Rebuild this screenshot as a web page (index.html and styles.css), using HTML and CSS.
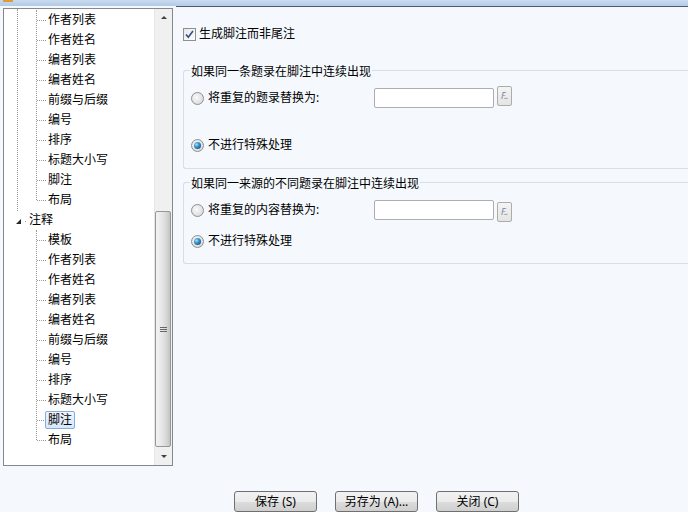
FILE: index.html
```html
<!DOCTYPE html>
<html lang="zh-CN">
<head>
<meta charset="utf-8">
<title>脚注</title>
<link rel="stylesheet" href="styles.css">
</head>
<body>
<div class="topbar">
  <div class="tb-left"><span class="tb-icon"></span></div>
  <div class="tb-right"></div>
</div>
<div class="main">
  <div class="tree">
    <div class="tree-body">
      <div class="branch outer">
        <div class="row">作者列表</div>
        <div class="row">作者姓名</div>
        <div class="row">编者列表</div>
        <div class="row">编者姓名</div>
        <div class="row">前缀与后缀</div>
        <div class="row">编号</div>
        <div class="row">排序</div>
        <div class="row">标题大小写</div>
        <div class="row">脚注</div>
        <div class="row">布局</div>
      </div>
      <div class="node"><span class="expander"></span><span class="node-stub"></span><span class="node-text">注释</span></div>
      <div class="branch">
        <div class="row">模板</div>
        <div class="row">作者列表</div>
        <div class="row">作者姓名</div>
        <div class="row">编者列表</div>
        <div class="row">编者姓名</div>
        <div class="row">前缀与后缀</div>
        <div class="row">编号</div>
        <div class="row">排序</div>
        <div class="row">标题大小写</div>
        <div class="row row-sel"><span class="sel">脚注</span></div>
        <div class="row">布局</div>
      </div>
    </div>
    <div class="scrollbar">
      <div class="sb-btn"><span class="arr-up"></span></div>
      <div class="sb-track">
        <div class="sb-thumb"><span class="grip"></span></div>
      </div>
      <div class="sb-btn"><span class="arr-down"></span></div>
    </div>
  </div>
  <div class="content">
    <div class="check-row">
      <span class="checkbox"><svg width="11" height="11" viewBox="0 0 11 11"><path d="M2 5.5 L4.3 8.2 L9 2" fill="none" stroke="#34508f" stroke-width="1.7"/></svg></span>
      <span class="check-label">生成脚注而非尾注</span>
    </div>
    <div class="group g1">
      <div class="group-title">如果同一条题录在脚注中连续出现</div>
      <div class="opt-row first">
        <span class="radio"></span>
        <span class="opt-label">将重复的题录替换为:</span>
        <span class="input"></span>
        <span class="fbtn fbtn-up">F..</span>
      </div>
      <div class="opt-row second">
        <span class="radio checked"></span>
        <span class="opt-text">不进行特殊处理</span>
      </div>
    </div>
    <div class="group g2">
      <div class="group-title">如果同一来源的不同题录在脚注中连续出现</div>
      <div class="opt-row first">
        <span class="radio"></span>
        <span class="opt-label">将重复的内容替换为:</span>
        <span class="input"></span>
        <span class="fbtn fbtn-down">F..</span>
      </div>
      <div class="opt-row second">
        <span class="radio checked"></span>
        <span class="opt-text">不进行特殊处理</span>
      </div>
    </div>
  </div>
</div>
<div class="buttons">
  <div class="btn">保存 (S)</div>
  <div class="btn">另存为 (A)...</div>
  <div class="btn">关闭 (C)</div>
</div>
</body>
</html>
```
FILE: styles.css
```css
html, body {
  margin: 0;
  padding: 0;
}
body {
  width: 688px;
  height: 512px;
  overflow: hidden;
  background: #f5f9fe;
  font-family: "Noto Sans", "Noto Sans CJK SC", sans-serif;
  font-size: 12px;
  line-height: 16px;
  color: #000;
}

/* top strip */
.topbar {
  display: flex;
  height: 7px;
}
.tb-left {
  width: 176px;
  height: 6px;
  background: linear-gradient(#c8dbf0, #b3cbe6);
}
.tb-icon {
  display: block;
  width: 10px;
  height: 2px;
  margin-left: 3px;
  background: #e39a3a;
}
.tb-right {
  flex: 1;
  height: 6px;
  background: linear-gradient(#c9dcf1, #b4cce7);
  border-bottom: 1px solid #4f5a66;
}

.main {
  display: flex;
  height: 459px;
}

/* tree */
.tree {
  margin-top: 1px;
  margin-left: 3px;
  width: 168px;
  height: 456px;
  border: 1px solid #828790;
  background: #fff;
  display: flex;
}
.tree-body {
  width: 150px;
  padding-top: 1px;
  overflow: hidden;
}
.branch {
  position: relative;
}
.branch::before {
  content: "";
  position: absolute;
  left: 32px;
  top: 0;
  bottom: 10px;
  border-left: 1px dotted #9a9a9a;
}
.branch.outer::after {
  content: "";
  position: absolute;
  left: 13px;
  top: -1px;
  bottom: -1px;
  border-left: 1px dotted #9a9a9a;
}
.row {
  position: relative;
  height: 20px;
  line-height: 20px;
  padding-left: 44px;
  white-space: nowrap;
}
.row::after {
  content: "";
  position: absolute;
  left: 33px;
  top: 10px;
  width: 9px;
  border-top: 1px dotted #9a9a9a;
}
.row-sel {
  padding-left: 41px;
}
.sel {
  display: inline-block;
  line-height: 16px;
  padding: 0 2px;
  border: 1px solid #84acdd;
  border-radius: 2px;
  background: linear-gradient(#eef5fd, #d5e6fb);
  vertical-align: top;
  margin-top: 1px;
}
.node {
  height: 20px;
  display: flex;
  align-items: center;
}
.expander {
  width: 0;
  height: 0;
  margin-left: 12px;
  border-left: 5px solid transparent;
  border-bottom: 5px solid #262626;
  margin-top: 2px;
}
.node-stub {
  width: 1px;
  height: 1px;
  background: #9a9a9a;
  margin-left: 4px;
  margin-top: 2px;
}
.node-text {
  margin-left: 3px;
  line-height: 20px;
}

/* scrollbar */
.scrollbar {
  width: 17px;
  display: flex;
  flex-direction: column;
  background: #f0f0f0;
  border-left: 1px solid #e6e6e6;
}
.sb-btn {
  height: 17px;
  display: flex;
  align-items: center;
  justify-content: center;
}
.arr-up {
  width: 0;
  height: 0;
  border-left: 3px solid transparent;
  border-right: 3px solid transparent;
  border-bottom: 3px solid #404040;
}
.arr-down {
  width: 0;
  height: 0;
  border-left: 3px solid transparent;
  border-right: 3px solid transparent;
  border-top: 3px solid #404040;
}
.sb-track {
  flex: 1;
  display: flex;
  flex-direction: column;
  padding-top: 185px;
}
.sb-thumb {
  flex: 1;
  margin: 0 1px 1px 0;
  border: 1px solid #979797;
  border-radius: 2px;
  background: linear-gradient(to right, #f3f3f3 0%, #e6e6e6 45%, #d6d6d6 75%, #c2c2c2 100%);
  display: flex;
  align-items: center;
  justify-content: center;
}
.grip {
  width: 7px;
  height: 5px;
  background: repeating-linear-gradient(#666 0 1px, transparent 1px 2px);
}

/* right content */
.content {
  flex: 1;
  padding-left: 10px;
  padding-top: 17px;
  display: flex;
  flex-direction: column;
}
.check-row {
  height: 20px;
  display: flex;
  align-items: center;
}
.checkbox {
  width: 11px;
  height: 11px;
  border: 1px solid #8e8f8f;
  background: linear-gradient(135deg, #e8e8e8, #fdfdfd);
  display: flex;
  align-items: center;
  justify-content: center;
}
.check-label {
  margin-left: 3px;
}

.group {
  display: flex;
  flex-direction: column;
  border: 1px solid #d5dfe5;
  border-right: none;
  border-radius: 3px 0 0 3px;
  padding-left: 7px;
}
.g1 {
  margin-top: 26px;
  padding-bottom: 13px;
}
.g2 {
  margin-top: 13px;
  padding-bottom: 12px;
}
.group-title {
  align-self: flex-start;
  margin-top: -7px;
  margin-left: -1px;
  height: 16px;
  line-height: 16px;
  padding: 0 1px;
  background: #f5f9fe;
}
.opt-row {
  display: flex;
  align-items: center;
}
.opt-row.first {
  height: 24px;
  margin-top: 6px;
}
.g1 .opt-row.second {
  height: 20px;
  margin-top: 25px;
}
.g2 .opt-row.second {
  height: 20px;
  margin-top: 9px;
}
.radio {
  width: 11px;
  height: 11px;
  border: 1px solid #8e8f8f;
  border-radius: 50%;
  background: radial-gradient(circle at 40% 40%, #fafafa 0%, #e2e2e2 60%, #cfcfcf 100%);
  display: flex;
  align-items: center;
  justify-content: center;
  flex: none;
}
.radio.checked::after {
  content: "";
  width: 7px;
  height: 7px;
  border-radius: 50%;
  background: radial-gradient(circle at 35% 35%, #a7e3fb 0%, #3d9ad6 35%, #15548e 80%, #0c3f70 100%);
}
.opt-label {
  margin-left: 4px;
  width: 166px;
  white-space: nowrap;
}
.opt-text {
  margin-left: 4px;
}
.input {
  width: 118px;
  height: 18px;
  border: 1px solid #abadb3;
  border-radius: 2px;
  background: #fff;
}
.fbtn {
  width: 13px;
  height: 18px;
  margin-left: 3px;
  border: 1px solid #acacac;
  border-radius: 2px;
  background: linear-gradient(#f4f4f4, #e4e4e4);
  font-size: 9px;
  font-style: italic;
  color: #6f8296;
  line-height: 18px;
  text-align: center;
  overflow: hidden;
  letter-spacing: -0.5px;
}
.fbtn-up {
  align-self: flex-start;
}
.fbtn-down {
  align-self: flex-end;
}

/* bottom buttons */
.buttons {
  display: flex;
  gap: 18px;
  margin-top: 25px;
  margin-left: 234px;
}
.btn {
  width: 81px;
  height: 19px;
  border: 1px solid #707070;
  border-radius: 3px;
  background: linear-gradient(#f2f2f2 0%, #ebebeb 50%, #dddddd 51%, #cfcfcf 100%);
  line-height: 19px;
  text-align: center;
  white-space: nowrap;
}
```
